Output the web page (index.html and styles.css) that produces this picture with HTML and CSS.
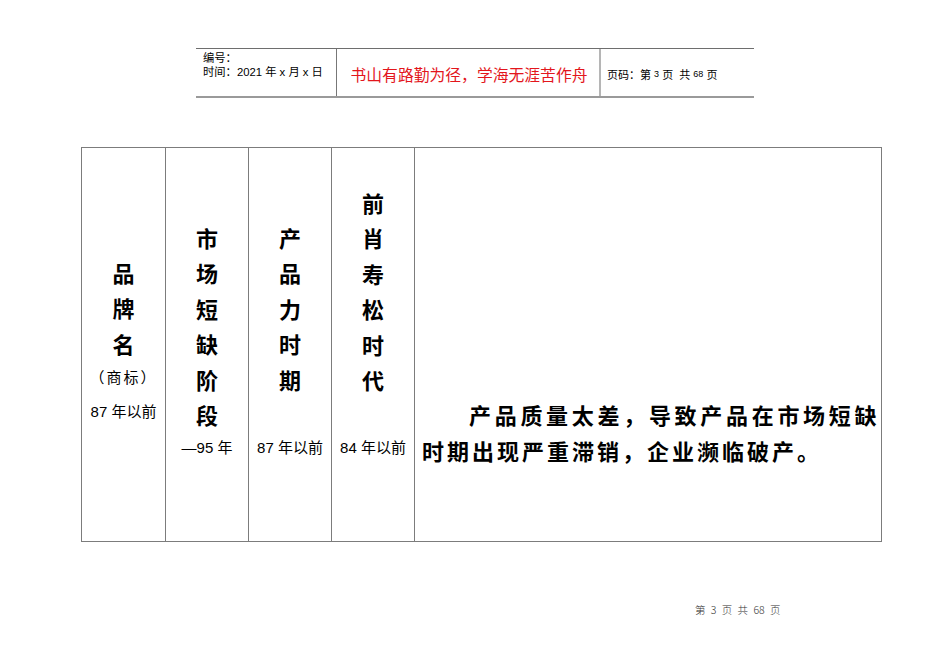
FILE: index.html
```html
<!DOCTYPE html>
<html lang="zh-CN">
<head>
<meta charset="utf-8">
<title>页码：第3页</title>
<link rel="stylesheet" href="styles.css">
</head>
<body>
<div class="page">
  <div class="header">
    <div class="h-left">
      <div class="h-line">编号：</div>
      <div class="h-line">时间：2021 年 x 月 x 日</div>
    </div>
    <div class="h-mid">书山有路勤为径，学海无涯苦作舟</div>
    <div class="h-right">页码：第 <span class="num">3</span> 页&nbsp; 共 <span class="num">68</span> 页</div>
  </div>

  <div class="table">
    <div class="cell c1">
      <div class="big">品</div>
      <div class="big">牌</div>
      <div class="big">名</div>
      <div class="small s1 paren">（商标）</div>
      <div class="small s1">87 年以前</div>
    </div>
    <div class="cell c2">
      <div class="big">市</div>
      <div class="big">场</div>
      <div class="big">短</div>
      <div class="big">缺</div>
      <div class="big">阶</div>
      <div class="big">段</div>
      <div class="small">—95 年</div>
    </div>
    <div class="cell c3">
      <div class="big">产</div>
      <div class="big">品</div>
      <div class="big">力</div>
      <div class="big">时</div>
      <div class="big">期</div>
      <div class="small gap">87 年以前</div>
    </div>
    <div class="cell c4">
      <div class="big">前</div>
      <div class="big">肖</div>
      <div class="big">寿</div>
      <div class="big">松</div>
      <div class="big">时</div>
      <div class="big">代</div>
      <div class="small gap">84 年以前</div>
    </div>
    <div class="cell c5">
      <p class="para"><span class="l1">产品质量太差，导致产品在市场短缺</span><br>时期出现严重滞销，企业濒临破产。</p>
    </div>
  </div>

  <div class="footer">第 3 页 共 68 页</div>
</div>
</body>
</html>
```

FILE: styles.css
```css
html, body {
  margin: 0;
  padding: 0;
  background: #ffffff;
}

body {
  font-family: "Liberation Sans", "Noto Sans CJK SC", sans-serif;
  color: #000;
}

.page {
  width: 950px;
  height: 672px;
  padding-top: 48px;
  box-sizing: border-box;
}

.header {
  margin-left: 196px;
  width: 558px;
  height: 47px;
  border-top: 1px solid #6e6e6e;
  border-bottom: 2px solid #9a9a9a;
  display: grid;
  grid-template-columns: 141px 264px 153px;
}

.h-left {
  padding: 2px 0 0 7px;
  font-size: 11.3px;
  line-height: 14px;
  border-right: 1px solid #777;
}

.h-mid {
  display: flex;
  align-items: center;
  justify-content: center;
  padding: 3px 0 0 2px;
  color: #e3161c;
  font-family: "Noto Sans CJK SC", sans-serif;
  font-size: 15.8px;
  border-right: 2px solid #b5b5b5;
}

.h-right {
  display: flex;
  align-items: center;
  padding: 3px 0 0 6px;
  font-size: 11px;
  white-space: pre;
}

.h-right .num {
  font-size: 9px;
}

.table {
  margin-top: 49px;
  margin-left: 81px;
  width: 801px;
  height: 395px;
  box-sizing: border-box;
  background: #7c7c7c;
  padding: 1px;
  display: grid;
  grid-template-columns: 83px 82px 82px 82px 466px;
  column-gap: 1px;
}

.cell {
  background: #fff;
  text-align: center;
  font-family: "Noto Sans CJK SC", sans-serif;
}

.big {
  font-size: 22px;
  font-weight: 700;
  line-height: 35.4px;
  height: 35.4px;
}

.small {
  font-family: "Liberation Sans", "Noto Sans CJK SC", sans-serif;
  font-size: 15px;
  line-height: 32px;
  white-space: nowrap;
}

.small.s1 {
  line-height: 34px;
}

.small.paren {
  letter-spacing: 2px;
}

.small.gap {
  margin-top: 35px;
}

.c1 { padding-top: 107px; }
.c2 { padding-top: 72px; }
.c3 { padding-top: 72px; }
.c4 { padding-top: 37px; }

.c5 {
  text-align: left;
  padding: 248px 5px 0 7px;
}

.para {
  margin: 0;
  font-size: 22px;
  font-weight: 700;
  line-height: 36px;
  letter-spacing: 3px;
  white-space: nowrap;
}

.para .l1 {
  padding-left: 47px;
  letter-spacing: 3.7px;
}

.footer {
  margin-top: 60px;
  margin-left: 695px;
  font-family: "Noto Sans CJK SC", sans-serif;
  font-weight: 300;
  font-size: 10.5px;
  color: #333;
  word-spacing: 3px;
}
```
